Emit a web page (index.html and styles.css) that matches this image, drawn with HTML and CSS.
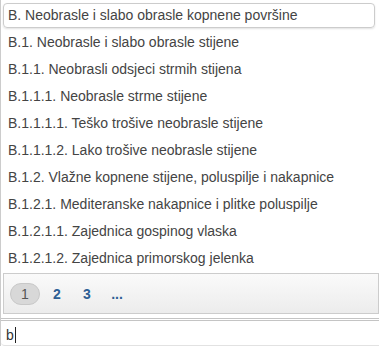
FILE: index.html
```html
<!DOCTYPE html>
<html lang="hr">
<head>
  <meta charset="UTF-8" />
  <title>Stanišni tipovi</title>
  <link rel="stylesheet" href="styles.css">
</head>
<body>
  <div class="picker">
    <ul class="options">
      <li class="option active">B. Neobrasle i slabo obrasle kopnene površine</li>
      <li class="option">B.1. Neobrasle i slabo obrasle stijene</li>
      <li class="option">B.1.1. Neobrasli odsjeci strmih stijena</li>
      <li class="option">B.1.1.1. Neobrasle strme stijene</li>
      <li class="option">B.1.1.1.1. Teško trošive neobrasle stijene</li>
      <li class="option">B.1.1.1.2. Lako trošive neobrasle stijene</li>
      <li class="option">B.1.2. Vlažne kopnene stijene, poluspilje i nakapnice</li>
      <li class="option">B.1.2.1. Mediteranske nakapnice i plitke poluspilje</li>
      <li class="option">B.1.2.1.1. Zajednica gospinog vlaska</li>
      <li class="option">B.1.2.1.2. Zajednica primorskog jelenka</li>
    </ul>
    <div class="pager">
      <span class="page current">1</span>
      <a class="page">2</a>
      <a class="page">3</a>
      <a class="page">...</a>
    </div>
    <div class="search">
      <span class="typed">b</span><span class="caret"></span>
    </div>
  </div>
</body>
</html>
```

FILE: styles.css
```css
* {
  box-sizing: border-box;
  margin: 0;
  padding: 0;
}

body {
  font-family: 'Liberation Sans', Arial, sans-serif;
  font-size: 14px;
  color: #444;
  background: #fff;
}

.picker {
  width: 379px;
  border-left: 1px solid #ccc;
}

.options {
  list-style: none;
  padding: 3px 4px 0 2px;
}

.option {
  height: 25px;
  line-height: 23px;
  margin-bottom: 2px;
  padding: 0 4px;
  border: 1px solid transparent;
  border-radius: 4px;
  white-space: nowrap;
}

.option.active {
  border-color: #ccc;
  box-shadow: 0 1px 2px rgba(0, 0, 0, 0.12);
}

.pager {
  margin: 0 0 0 2px;
  height: 41px;
  display: flex;
  align-items: center;
  gap: 4px;
  padding: 0 6px;
  border: 1px solid #ccc;
  background: linear-gradient(to bottom, #fafafa 0%, #ececec 100%);
}

.page {
  min-width: 26px;
  height: 22px;
  line-height: 22px;
  text-align: center;
  font-weight: bold;
  color: #2e5f94;
}

.page.current {
  width: 30px;
  border-radius: 11px;
  background: #d8d8d8;
  border: 1px solid #c8c8c8;
  line-height: 20px;
  font-weight: normal;
  color: #555;
}

.search {
  margin-top: 4px;
  border-top: 3px double #c4c4c4;
  height: 28px;
  padding: 4px 5px 0 5px;
  border-bottom: 1px solid #e2e2e2;
  border-bottom-left-radius: 4px;
  display: flex;
  align-items: center;
  color: #333;
}

.caret {
  display: inline-block;
  width: 1px;
  height: 16px;
  background: #222;
  margin-left: 1px;
}
```
